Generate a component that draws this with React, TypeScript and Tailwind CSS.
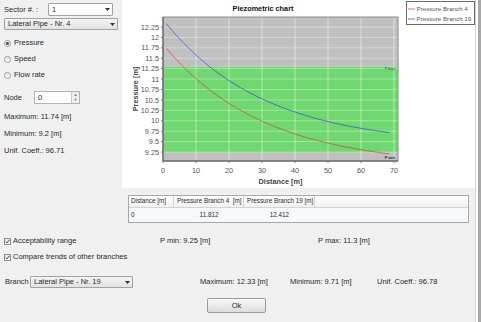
const W = 353
const H = 188
const X0 = 41
const X1 = 276
const Y0 = 17
const Y1 = 161
const xs = (d: number) => X0 + d * 3.3
const ys = (v: number) => 27 + (12.25 - v) * 41.67

const yTicks = [9.25, 9.5, 9.75, 10, 10.25, 10.5, 10.75, 11, 11.25, 11.5, 11.75, 12, 12.25]
const xTicks = [0, 10, 20, 30, 40, 50, 60, 70]

function curve(base: number, amp: number) {
  const pts: string[] = []
  for (let d = 1; d <= 68.5; d += 0.5) {
    const v = base + amp * Math.exp(-0.033 * (d - 1))
    pts.push(`${xs(d).toFixed(1)},${ys(v).toFixed(1)}`)
  }
  return pts.join(' ')
}

function Chart() {
  const pmax = ys(11.3)
  const pmin = ys(9.25)
  return (
    <svg width={W} height={H} className="block" style={{ fontFamily: 'Liberation Sans, Arial, sans-serif' }}>
      <text x={141} y={11} textAnchor="middle" fontSize="7.3" fontWeight="bold" fill="#111">
        Piezometric chart
      </text>

      {/* plot background bands */}
      <rect x={X0} y={Y0} width={X1 - X0} height={pmax - Y0} fill="#c0c0c0" />
      <rect x={X0} y={pmax} width={X1 - X0} height={pmin - pmax} fill="#70d870" />
      <rect x={X0} y={pmin} width={X1 - X0} height={Y1 - pmin} fill="#c0c0c0" />

      {xTicks.slice(1).map((t) => (
        <line key={t} x1={xs(t)} x2={xs(t)} y1={Y0} y2={Y1} stroke="#fff" strokeOpacity="0.45" />
      ))}
      {yTicks.map((t) => (
        <line key={t} x1={X0} x2={X1} y1={ys(t)} y2={ys(t)} stroke="#fff" strokeOpacity="0.35" />
      ))}

      <polyline points={curve(8.9, 2.84)} fill="none" stroke="#e02020" strokeOpacity="0.55" strokeWidth="1" />
      <polyline points={curve(9.4, 2.93)} fill="none" stroke="#2020e0" strokeOpacity="0.55" strokeWidth="1" />

      <text x={273} y={69.5} textAnchor="end" fontSize="3.6" fill="#333">P max</text>
      <text x={273} y={159} textAnchor="end" fontSize="3.8" fontWeight="bold" fill="#222">P min</text>

      <rect x={X0} y={Y0} width={X1 - X0} height={Y1 - Y0} fill="none" stroke="#8a8a8a" />
      <line x1={X0} x2={X0} y1={Y0} y2={Y1} stroke="#555" />
      <line x1={X0} x2={X1} y1={Y1} y2={Y1} stroke="#555" />

      {yTicks.map((t) => (
        <g key={t}>
          <line x1={X0 - 2} x2={X0} y1={ys(t)} y2={ys(t)} stroke="#777" />
          <text x={X0 - 4} y={ys(t) + 2.6} textAnchor="end" fontSize="7.3" fill="#555">
            {t}
          </text>
        </g>
      ))}
      {xTicks.map((t) => (
        <g key={t}>
          <line x1={xs(t)} x2={xs(t)} y1={Y1} y2={Y1 + 2} stroke="#777" />
          <text x={xs(t)} y={173} textAnchor="middle" fontSize="7.3" fill="#555">
            {t}
          </text>
        </g>
      ))}

      <text x={158.5} y={184} textAnchor="middle" fontSize="7.3" fontWeight="bold" fill="#444">
        Distance [m]
      </text>
      <text
        x={0}
        y={0}
        transform="translate(15.5 89) rotate(-90)"
        textAnchor="middle"
        fontSize="7.3"
        fontWeight="bold"
        fill="#444"
      >
        Pressure [m]
      </text>

      {/* legend */}
      <rect x={284.5} y={1.5} width={68} height={23} fill="#fff" stroke="#6a6a6a" />
      <line x1={286} x2={293} y1={9} y2={9} stroke="#e07070" />
      <text x={294.5} y={11.3} fontSize="6.2" fill="#555">Pressure Branch 4</text>
      <line x1={286} x2={293} y1={19} y2={19} stroke="#7070e0" />
      <text x={294.5} y={21.3} fontSize="6.2" fill="#555">Pressure Branch 19</text>
    </svg>
  )
}

function Arrow() {
  return (
    <svg width="5" height="3" viewBox="0 0 5 3">
      <path d="M0 0H5L2.5 3Z" fill="#333" />
    </svg>
  )
}

function Select({ value, w, white }: { value: string; w: string; white?: boolean }) {
  return (
    <div
      className={
        'flex items-center h-full border border-[#a2a2a2] rounded-[1px] ' +
        w +
        (white ? ' bg-white' : ' bg-gradient-to-b from-[#f4f4f4] to-[#e2e2e2]')
      }
    >
      <span className="flex-1 pl-[3px] truncate">{value}</span>
      <span className="w-[10px] flex items-center justify-center">
        <Arrow />
      </span>
    </div>
  )
}

function Radio({ label, on }: { label: string; on?: boolean }) {
  return (
    <div className="h-[16px] flex items-center">
      <span className="w-[7px] h-[7px] rounded-full border border-[#9a9a9a] bg-gradient-to-b from-[#e8e8e8] to-white flex items-center justify-center">
        {on && <span className="w-[3px] h-[3px] rounded-full bg-[#3a4a5a]" />}
      </span>
      <span className="ml-[3px]">{label}</span>
    </div>
  )
}

function Check({ label }: { label: string }) {
  return (
    <div className="flex items-center">
      <span className="w-[7px] h-[7px] border border-[#8e8e8e] bg-gradient-to-b from-[#e4e4e4] to-white flex items-center justify-center">
        <svg width="5" height="5" viewBox="0 0 5 5">
          <path d="M0.6 2.6L1.9 3.9L4.4 0.9" fill="none" stroke="#3a3a3a" strokeWidth="1" />
        </svg>
      </span>
      <span className="ml-[2px]">{label}</span>
    </div>
  )
}

export default function App() {
  return (
    <div className="w-[481px] h-[322px] bg-[#f0f0f0] flex overflow-hidden font-['Liberation_Sans',Arial,sans-serif] text-[7.5px] text-[#2a2a2a] leading-none">
      <div className="w-[475px] flex flex-col">
        <div className="h-[188px] flex">
          {/* left controls */}
          <div className="w-[122px] pl-1 pt-[3px] flex flex-col">
            <div className="h-[13px] flex items-center">
              <span className="w-[44px]">Sector #. :</span>
              <Select value="1" w="w-[65px]" white />
            </div>
            <div className="h-[12px] mt-[2px] flex">
              <Select value="Lateral Pipe - Nr. 4" w="w-[114px]" />
            </div>
            <div className="mt-[5px]">
              <Radio label="Pressure" on />
              <Radio label="Speed" />
              <Radio label="Flow rate" />
            </div>
            <div className="h-[13px] mt-[8px] flex items-center">
              <span className="w-[30px]">Node</span>
              <div className="w-[46px] h-full flex border border-[#b4b4b4] bg-white">
                <span className="flex-1 pl-[3px] flex items-center">0</span>
                <span className="w-[8px] flex flex-col border-l border-[#c8c8c8] bg-[#eeeeee]">
                  <span className="flex-1 flex items-center justify-center text-[4px] text-[#777]">▲</span>
                  <span className="flex-1 flex items-center justify-center text-[4px] text-[#777]">▼</span>
                </span>
              </div>
            </div>
            <div className="h-[12px] mt-[7px] flex items-center">Maximum: 11.74 [m]</div>
            <div className="h-[12px] mt-[5px] flex items-center">Minimum: 9.2 [m]</div>
            <div className="h-[12px] mt-[5px] flex items-center">Unif. Coeff.: 96.71</div>
          </div>

          {/* chart panel */}
          <div className="flex-1 bg-white">
            <Chart />
          </div>
        </div>

        {/* data table */}
        <div className="mt-[7px] ml-[128px] w-[341px] border border-[#a8a8a8] bg-white text-[6.3px] whitespace-nowrap">
          <div className="grid grid-cols-[45px_70px_71px_1fr] h-[12px] bg-gradient-to-b from-white to-[#f0f0f0] border-b border-[#d4d4d4]">
            <div className="flex items-center pl-[2px] border-r border-[#d4d4d4] overflow-hidden">Distance [m]</div>
            <div className="flex items-center pl-[3px] border-r border-[#d4d4d4] overflow-hidden">Pressure Branch 4&nbsp; [m]</div>
            <div className="flex items-center pl-[3px] border-r border-[#d4d4d4] overflow-hidden">Pressure Branch 19 [m]</div>
            <div />
          </div>
          <div className="grid grid-cols-[45px_70px_71px_1fr] h-[14px] bg-[#f5f9fd]">
            <div className="flex items-center pl-[2px]">0</div>
            <div className="flex items-center justify-center">11.812</div>
            <div className="flex items-center justify-center">12.412</div>
            <div />
          </div>
        </div>

        <div className="h-[12px] mt-[12px] flex items-center pl-1">
          <div className="w-[156px]">
            <Check label="Acceptability range" />
          </div>
          <span className="w-[158px]">P min: 9.25 [m]</span>
          <span>P max: 11.3 [m]</span>
        </div>
        <div className="h-[12px] mt-[4px] flex items-center pl-1">
          <Check label="Compare trends of other branches" />
        </div>

        <div className="h-[12px] mt-[13px] flex items-center pl-[5px]">
          <span className="w-[25px]">Branch</span>
          <Select value="Lateral Pipe - Nr. 19" w="w-[103px]" />
          <span className="ml-[67px] w-[90px]">Maximum: 12.33 [m]</span>
          <span className="w-[87px]">Minimum: 9.71 [m]</span>
          <span>Unif. Coeff.: 96.78</span>
        </div>

        <div className="mt-[10px] ml-[207px] w-[59px] h-[15px] border border-[#9a9a9a] rounded-[2px] bg-gradient-to-b from-[#f8f8f8] to-[#dcdcdc] flex items-center justify-center">
          Ok
        </div>
      </div>
      <div className="w-[1px] bg-[#d4d4d4]" />
      <div className="w-[2px] bg-white" />
      <div className="w-[3px] bg-[#a8a8a8]" />
    </div>
  )
}
